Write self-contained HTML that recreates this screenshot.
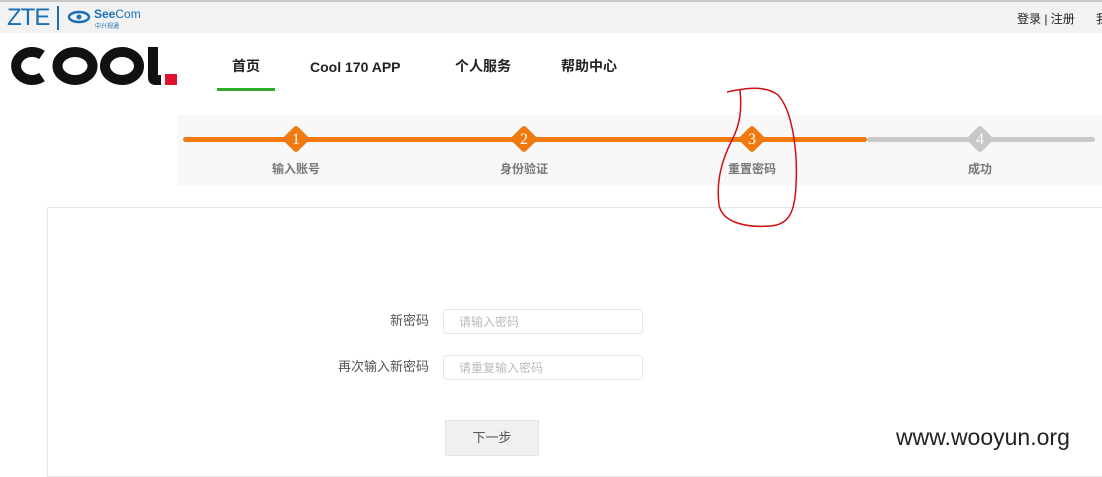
<!DOCTYPE html>
<html><head><meta charset="utf-8"><style>
*{margin:0;padding:0;box-sizing:border-box}
body{width:1102px;height:467px;overflow:hidden;background:#fff;font-family:"Liberation Sans","Noto Sans CJK SC",sans-serif;position:relative}
.abs{position:absolute}
.top{left:0;top:0;width:1102px;height:33px;background:#f2f2f2;border-top:2px solid #c8c8c8}
.nav{font-size:14px;color:#222;font-weight:bold;top:56px;line-height:20px;height:20px}
.band{left:177px;top:115px;width:925px;height:71px;background:#f8f8f8}
.dia{width:20px;height:20px;transform:rotate(45deg);border-radius:3px}
.num{width:30px;text-align:center;color:#fff;font-size:16px;font-family:"Liberation Serif",serif;top:130px;line-height:20px}
.lbl{font-size:12px;color:#777;font-weight:bold;width:100px;text-align:center;top:160px}
.inp{width:200px;height:25px;border:1px solid #e6e6e6;border-radius:4px;left:443px;font-size:12px;color:#bbb;padding:4px 15px;line-height:16px}
.fl{font-size:13px;color:#555;text-align:right;width:110px;left:319px;line-height:18px}
</style></head><body>
<div class="abs top"></div>
<div class="abs" style="left:7px;top:4px;font-size:24px;color:#1a6fb5;letter-spacing:-1px">ZTE</div>
<div class="abs" style="left:57px;top:6px;width:2px;height:24px;background:#1a6fb5"></div>
<svg class="abs" style="left:67px;top:10px" width="24" height="14"><ellipse cx="12" cy="7" rx="10" ry="5" fill="none" stroke="#1a6fb5" stroke-width="2.5"/><circle cx="12" cy="7" r="2.5" fill="#1a6fb5"/></svg>
<div class="abs" style="left:94px;top:7px;font-size:12px;color:#1a6fb5;font-weight:bold">See<span style="font-weight:normal">Com</span></div>
<div class="abs" style="left:95px;top:21px;font-size:6px;color:#1a6fb5">中兴视通</div>
<div class="abs" style="left:1017px;top:10px;font-size:12px;color:#222">登录 | 注册</div>
<div class="abs" style="left:1096px;top:10px;font-size:12px;color:#222">我</div>
<svg class="abs" style="left:0;top:40px" width="180" height="52">
<path d="M42 15 A16 14 0 1 0 42 37" fill="none" stroke="#111" stroke-width="10"/>
<ellipse cx="75" cy="26" rx="17.5" ry="14" fill="none" stroke="#111" stroke-width="10"/>
<ellipse cx="122" cy="26" rx="17" ry="14" fill="none" stroke="#111" stroke-width="10"/>
<path d="M148 7 H158 V35 H161 V45 H156 Q148 45 148 37 Z" fill="#111"/>
<rect x="165" y="34" width="12" height="11" fill="#e0102e"/>
</svg>
<div class="abs nav" style="left:232px">首页</div>
<div class="abs" style="left:217px;top:88px;width:58px;height:3px;background:#2caa2c"></div>
<div class="abs nav" style="left:310px;top:57px">Cool 170 APP</div>
<div class="abs nav" style="left:455px">个人服务</div>
<div class="abs nav" style="left:561px">帮助中心</div>
<div class="abs band"></div>
<div class="abs" style="left:183px;top:137px;width:684px;height:5px;background:#f07a10;border-radius:3px"></div>
<div class="abs" style="left:867px;top:137px;width:228px;height:5px;background:#c8c8c8;border-radius:3px"></div>
<div class="abs dia" style="left:286px;top:129px;background:#f07a10"></div>
<div class="abs dia" style="left:514px;top:129px;background:#f07a10"></div>
<div class="abs dia" style="left:742px;top:129px;background:#f07a10"></div>
<div class="abs dia" style="left:970px;top:129px;background:#c8c8c8"></div>
<div class="abs num" style="left:281px">1</div>
<div class="abs num" style="left:509px">2</div>
<div class="abs num" style="left:737px">3</div>
<div class="abs num" style="left:965px">4</div>
<div class="abs lbl" style="left:246px">输入账号</div>
<div class="abs lbl" style="left:474px">身份验证</div>
<div class="abs lbl" style="left:702px">重置密码</div>
<div class="abs lbl" style="left:930px">成功</div>
<div class="abs" style="left:47px;top:207px;width:1060px;height:270px;border:1px solid #e6e6e6"></div>
<div class="abs fl" style="top:312px">新密码</div>
<div class="abs inp" style="top:309px">请输入密码</div>
<div class="abs fl" style="top:358px">再次输入新密码</div>
<div class="abs inp" style="top:355px">请重复输入密码</div>
<div class="abs" style="left:445px;top:420px;width:94px;height:36px;background:#f2f0ee;border:1px solid #e2e2e2;font-size:13px;color:#555;text-align:center;line-height:34px">下一步</div>
<div class="abs" style="left:896px;top:424px;font-size:23px;color:#222">www.wooyun.org</div>
<svg class="abs" style="left:0;top:0" width="1102" height="467"><path d="M727 92 C745 88 765 85 778 95 C792 110 798 150 796 185 C795 210 790 225 770 226 C745 228 722 222 719 205 C716 180 722 160 732 140 C740 125 742 110 740 90" fill="none" stroke="#d01010" stroke-width="1.5"/></svg>
</body></html>
